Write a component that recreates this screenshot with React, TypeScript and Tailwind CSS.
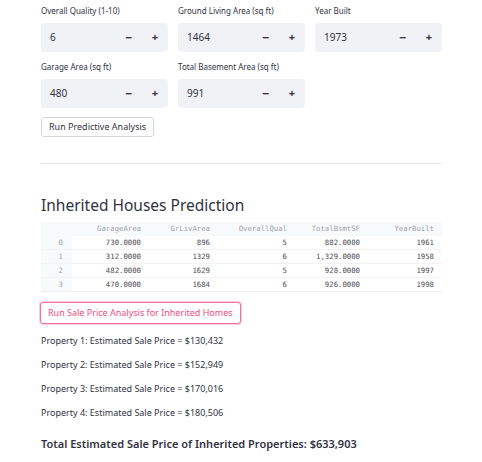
import React from 'react';

const font = { fontFamily: '"Noto Sans", "Open Sans", sans-serif' };

function NumberInput({ label, value }: { label: string; value: string }) {
  return (
    <div className="flex flex-col">
      <label className="text-[8px] leading-[10px] text-[#31333f] mb-[7px] h-[10px]">{label}</label>
      <div className="flex items-center h-[29px] bg-[#f0f2f6] rounded-[4px] text-[10px] text-[#31333f]">
        <span className="flex-1 pl-[9px]">{value}</span>
        <span className="w-[26px] text-center text-[12px] font-bold">−</span>
        <span className="w-[26px] text-center text-[11px] font-bold">+</span>
      </div>
    </div>
  );
}

const rows = [
  ['0', '730.0000', '896', '5', '882.0000', '1961'],
  ['1', '312.0000', '1329', '6', '1,329.0000', '1958'],
  ['2', '482.0000', '1629', '5', '928.0000', '1997'],
  ['3', '470.0000', '1684', '6', '926.0000', '1998'],
];
const headers = ['', 'GarageArea', 'GrLivArea', 'OverallQual', 'TotalBsmtSF', 'YearBuilt'];
const widths = ['w-[31px]', 'w-[75px]', 'w-[69px]', 'w-[77px]', 'w-[73px]', 'w-[74px]'];

export default function App() {
  return (
    <div className="w-[482px] h-[462px] bg-white overflow-hidden" style={font}>
      <div className="w-[401px] ml-[41px] pt-[6px]">
        <div className="grid grid-cols-3 gap-x-[10px] gap-y-[10px]">
          <NumberInput label="Overall Quality (1-10)" value="6" />
          <NumberInput label="Ground Living Area (sq ft)" value="1464" />
          <NumberInput label="Year Built" value="1973" />
          <NumberInput label="Garage Area (sq ft)" value="480" />
          <NumberInput label="Total Basement Area (sq ft)" value="991" />
        </div>
        <button className="mt-[9px] h-[20px] px-[7px] border border-[#d6d6d9] rounded-[3px] text-[9px] text-[#31333f] bg-white">
          Run Predictive Analysis
        </button>
        <div className="mt-[26px] border-t border-[#e6e6e9]" />
        <h3 className="mt-[30px] text-[15.5px] leading-[22px] text-[#31333f]">Inherited Houses Prediction</h3>
        <div className="mt-[6px] text-[7.3px] leading-[14px]" style={{ fontFamily: '"DejaVu Sans Mono", monospace' }}>
          <div className="flex bg-[#f8f9fb] text-[#a0a1a8] h-[14px]">
            {headers.map((h, i) => (
              <div key={i} className={`${widths[i]} text-right pr-[6px] whitespace-nowrap`}>{h}</div>
            ))}
          </div>
          {rows.map((r, ri) => (
            <div key={ri} className="flex h-[14px] text-[#4a4b52] border-b border-[#f3f3f5] last:border-[#eceef1]">
              {r.map((c, ci) => (
                <div
                  key={ci}
                  className={`${widths[ci]} text-right pr-[6px] whitespace-nowrap ${ci === 0 ? 'bg-[#f8f9fb] text-[#a3a4aa] pr-[9px]' : ''}`}
                >
                  {c}
                </div>
              ))}
            </div>
          ))}
        </div>
        <button className="mt-[10px] -ml-[1px] h-[22px] px-[7px] border-[1.5px] border-[#f0729a] rounded-[3px] text-[9px] text-[#ee4c80] bg-white shadow-[0_0_0_1px_rgba(240,114,154,0.35)]">
          Run Sale Price Analysis for Inherited Homes
        </button>
        <div className="text-[9px] text-[#31333f]">
          <p className="mt-[10px] leading-[14px]">Property 1: Estimated Sale Price = $130,432</p>
          <p className="mt-[10px] leading-[14px]">Property 2: Estimated Sale Price = $152,949</p>
          <p className="mt-[10px] leading-[14px]">Property 3: Estimated Sale Price = $170,016</p>
          <p className="mt-[10px] leading-[14px]">Property 4: Estimated Sale Price = $180,506</p>
        </div>
        <p className="mt-[16px] text-[11px] font-semibold text-[#31333f]">
          Total Estimated Sale Price of Inherited Properties: $633,903
        </p>
      </div>
    </div>
  );
}
